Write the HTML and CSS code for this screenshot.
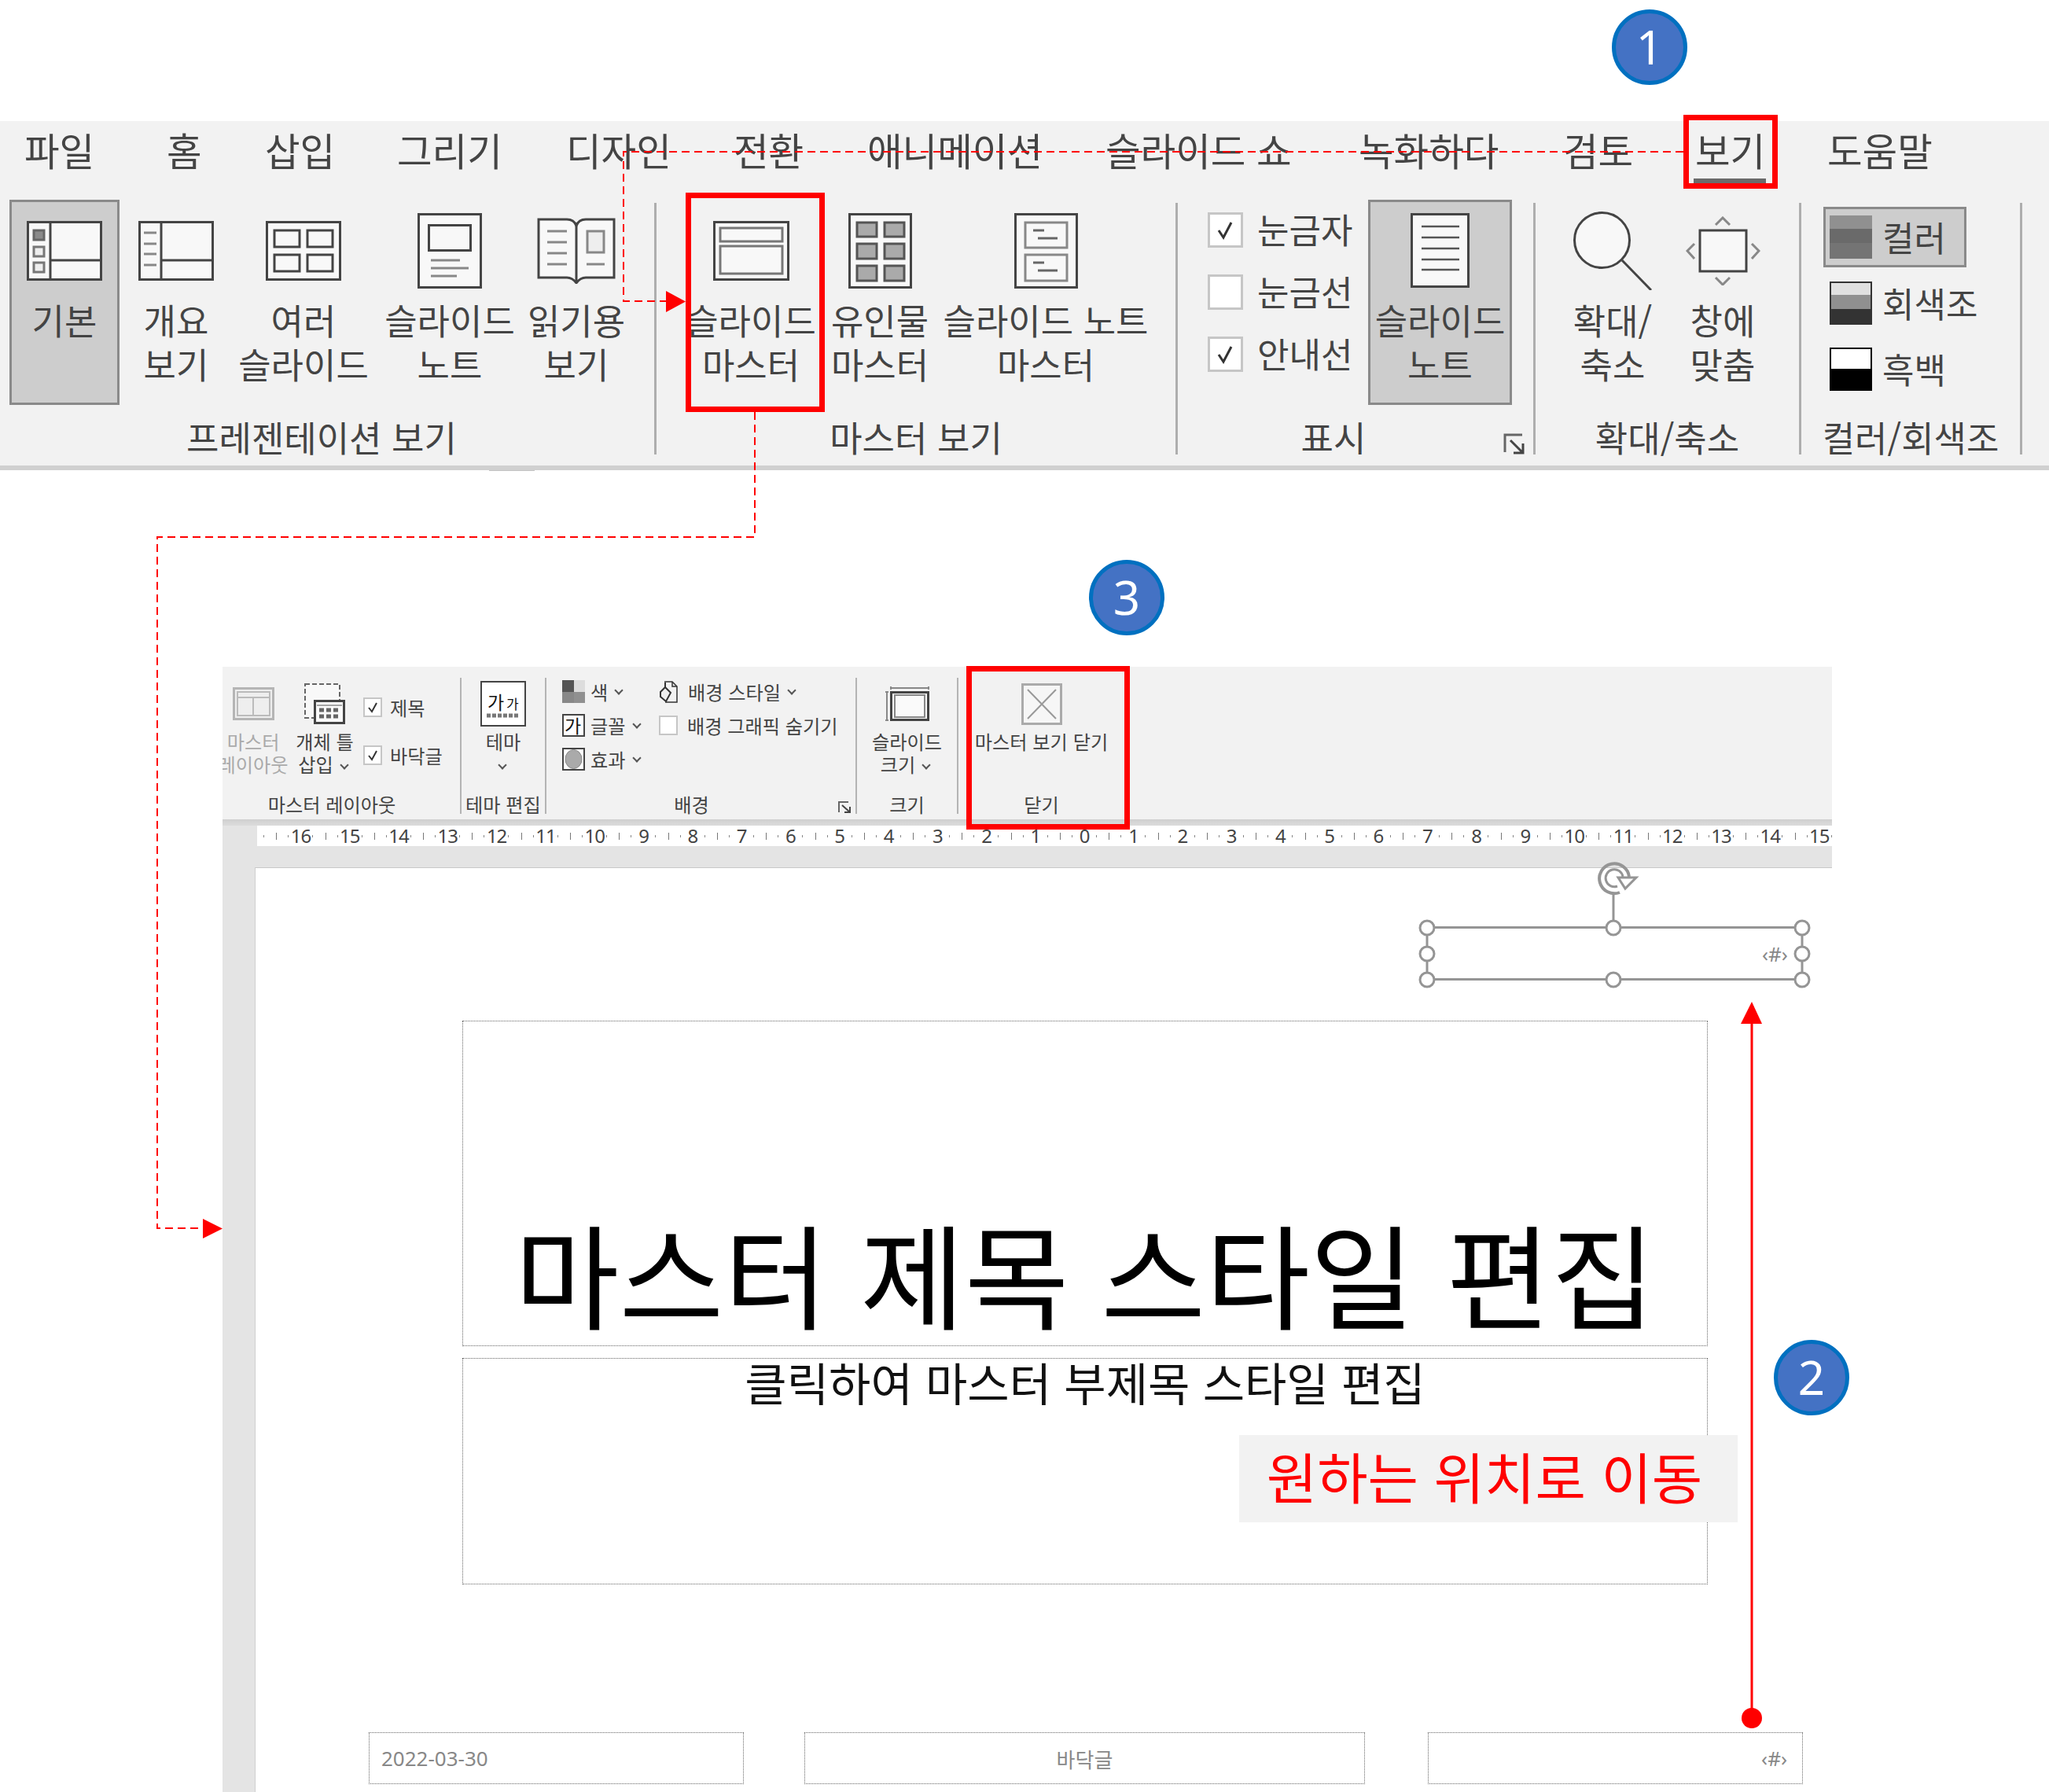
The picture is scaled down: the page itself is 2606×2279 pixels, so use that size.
FILE: index.html
```html
<!DOCTYPE html>
<html lang="ko">
<head>
    <meta charset="UTF-8">
    <title>슬라이드 마스터</title>
    <link rel="stylesheet" href="styles.css">
</head>
<body>
<div class="page">

    <!-- view tab ribbon -->
    <section class="ribbon">
        <nav class="tabs">
            <span>파일</span><span>홈</span><span>삽입</span><span>그리기</span><span>디자인</span><span>전환</span>
            <span>애니메이션</span><span>슬라이드 쇼</span><span>녹화하다</span><span>검토</span>
            <span class="tab-active">보기</span><span>도움말</span>
        </nav>
        <div class="groups">
            <div class="group group-views">
                <div class="group-body">
                    <div class="btn btn-on w-140">
                        <div class="slot"><svg width="96" height="76" viewBox="0 0 96 76"><rect x="1.5" y="1.5" width="93" height="73" class="ic"/><path d="M30 2V74M30 50H95" class="ln"/><rect x="9" y="12" width="13" height="12" fill="#8a8a8a" stroke="#666" stroke-width="3"/><rect x="9" y="33" width="13" height="12" fill="#eee" stroke="#777" stroke-width="3"/><rect x="9" y="53" width="13" height="12" fill="#eee" stroke="#777" stroke-width="3"/></svg></div>
                        <span>기본</span>
                    </div>
                    <div class="btn w-144">
                        <div class="slot"><svg width="96" height="76" viewBox="0 0 96 76"><rect x="1.5" y="1.5" width="93" height="73" class="ic"/><path d="M29 2V74M29 50H95" class="ln"/><path d="M7 15H23M7 29H23M7 42H23M7 56H23" class="bar"/></svg></div>
                        <span>개요<br>보기</span>
                    </div>
                    <div class="btn w-180">
                        <div class="slot"><svg width="96" height="76" viewBox="0 0 96 76"><rect x="1.5" y="1.5" width="93" height="73" class="ic"/><path d="M11 12H43V33H11ZM53 12H85V33H53ZM11 43H43V64H11ZM53 43H85V64H53Z" class="ln"/></svg></div>
                        <span>여러<br>슬라이드</span>
                    </div>
                    <div class="btn w-192">
                        <div class="slot"><svg width="82" height="96" viewBox="0 0 82 96"><rect x="1.5" y="1.5" width="79" height="93" class="ic"/><rect x="14.5" y="15.5" width="53" height="32" class="ln"/><path d="M17 60H54M17 70H65M17 80H50" class="bar"/></svg></div>
                        <span>슬라이드<br>노트</span>
                    </div>
                    <div class="btn w-130">
                        <div class="slot"><svg width="100" height="85" viewBox="0 0 100 85"><path d="M2 3H38Q47 3 50 11Q53 3 62 3H98V77H62Q55 77 50 84Q45 77 38 77H2Z" class="ic"/><path d="M50 11V84" class="ln"/><path d="M13 18H38M13 32H38M13 46H38M13 60H38M63 60H86" class="bar"/><rect x="64" y="18" width="21" height="27" fill="#eee" stroke="#888" stroke-width="3"/></svg></div>
                        <span>읽기용<br>보기</span>
                    </div>
                </div>
                <div class="group-label label-views">프레젠테이션 보기</div>
            </div>

            <div class="group group-master">
                <div class="group-body">
                    <div class="btn w-158">
                        <div class="slot"><svg width="97" height="76" viewBox="0 0 97 76"><rect x="1.5" y="1.5" width="94" height="73" class="ic"/><path d="M9 9H88V26H9ZM9 32H88V67H9Z" fill="none" stroke="#777" stroke-width="3"/></svg></div>
                        <span>슬라이드<br>마스터</span>
                    </div>
                    <div class="btn w-160">
                        <div class="slot"><svg width="81" height="96" viewBox="0 0 81 96"><rect x="1.5" y="1.5" width="78" height="93" class="ic"/><path d="M11 12H36V30H11ZM46 12H71V30H46ZM11 39H36V58H11ZM46 39H71V58H46ZM11 67H36V86H11ZM46 67H71V86H46Z" fill="#aaa" stroke="#555" stroke-width="3"/></svg></div>
                        <span>유인물<br>마스터</span>
                    </div>
                    <div class="btn w-262">
                        <div class="slot"><svg width="81" height="96" viewBox="0 0 81 96"><rect x="1.5" y="1.5" width="78" height="93" class="ic"/><path d="M14 12H67V44H14ZM14 53H67V86H14Z" fill="none" stroke="#888" stroke-width="3"/><path d="M24 22H38M30 32H55M24 63H38M30 73H55" class="bar dark"/></svg></div>
                        <span>슬라이드 노트<br>마스터</span>
                    </div>
                </div>
                <div class="group-label">마스터 보기</div>
            </div>

            <div class="group group-show">
                <div class="group-body">
                    <div class="checks">
                        <div class="check-row"><span class="box"><svg width="39" height="39" viewBox="0 0 39 39"><path d="M11 20L17 29L27 10" class="tick"/></svg></span>눈금자</div>
                        <div class="check-row"><span class="box"></span>눈금선</div>
                        <div class="check-row"><span class="box"><svg width="39" height="39" viewBox="0 0 39 39"><path d="M11 20L17 29L27 10" class="tick"/></svg></span>안내선</div>
                    </div>
                    <div class="btn btn-on w-183">
                        <div class="slot"><svg width="75" height="95" viewBox="0 0 75 95"><rect x="1.5" y="1.5" width="72" height="92" class="ic"/><path d="M14 17H62M14 31H62M14 45H62M14 59H62M14 72H62" class="ln thin"/></svg></div>
                        <span>슬라이드<br>노트</span>
                    </div>
                </div>
                <div class="group-label label-show">표시</div>
                <svg class="launcher" width="27" height="27" viewBox="0 0 27 27"><path d="M2 24V2H24" fill="none" stroke="#666" stroke-width="3"/><path d="M9 9L25 25M25 13V25H13" fill="none" stroke="#444" stroke-width="3"/></svg>
            </div>

            <div class="group group-zoom">
                <div class="group-body">
                    <div class="btn w-140">
                        <div class="slot"><svg width="100" height="100" viewBox="0 0 100 100"><ellipse cx="36.500" cy="36.500" rx="35" ry="35" fill="#f8f8f8" stroke="#444" stroke-width="3"/><path d="M62 62L99 100" stroke="#444" stroke-width="3"/></svg></div>
                        <span>확대/<br>축소</span>
                    </div>
                    <div class="btn w-140">
                        <div class="slot"><svg width="95" height="88" viewBox="0 0 95 88"><rect x="18" y="18" width="59" height="52" class="ic"/><path d="M38 11L47 2L56 11M38 78L47 87L56 78M11 35L2 44L11 54M84 35L93 44L84 54" fill="none" stroke="#888" stroke-width="3"/></svg></div>
                        <span>창에<br>맞춤</span>
                    </div>
                </div>
                <div class="group-label">확대/축소</div>
            </div>

            <div class="group group-color">
                <div class="group-body">
                    <div class="modes">
                        <div class="mode mode-on"><svg width="54" height="55" viewBox="0 0 54 55"><rect width="54" height="17" fill="#909090"/><rect y="17" width="54" height="18" fill="#6a6a6a"/><rect y="35" width="54" height="20" fill="#747474"/></svg>컬러</div>
                        <div class="mode"><svg width="54" height="55" viewBox="0 0 54 55"><rect width="54" height="55" fill="#333"/><rect x="2" y="2" width="50" height="15" fill="#e0e0e0"/><rect x="2" y="17" width="50" height="18" fill="#909090"/></svg>회색조</div>
                        <div class="mode"><svg width="54" height="55" viewBox="0 0 54 55"><rect width="54" height="55" fill="#000"/><rect x="2" y="2" width="50" height="25" fill="#fff"/></svg>흑백</div>
                    </div>
                </div>
                <div class="group-label">컬러/회색조</div>
            </div>
        </div>
    </section>

    <!-- slide master screenshot -->
    <section class="master-window">
        <div class="mribbon">
            <div class="mgroup mgroup-layout">
                <div class="mgroup-body">
                    <div class="mbtn mbtn-off w-82">
                        <div class="mslot"><svg width="53" height="42" viewBox="0 0 53 42"><rect x="1.5" y="1.5" width="50" height="39" fill="#eee" stroke="#b5b5b5" stroke-width="3"/><path d="M6 6H47V36H6ZM6 13H47M26 13V36" fill="none" stroke="#bbb" stroke-width="2"/></svg></div>
                        <span>마스터<br>레이아웃</span>
                    </div>
                    <div class="mbtn w-80">
                        <div class="mslot"><svg width="52" height="52" viewBox="0 0 52 52"><rect x="1" y="1" width="44" height="43" fill="#f8f8f8" stroke="#666" stroke-width="2" stroke-dasharray="6 3"/><rect x="13.500" y="22.500" width="37" height="28" fill="#fafafa" stroke="#444" stroke-width="3"/><path d="M16 28H48" stroke="#888" stroke-width="1.500"/><path d="M19 34H45M19 42H45" stroke="#666" stroke-width="5" stroke-dasharray="6 3"/></svg></div>
                        <span>개체 틀<br>삽입 <i class="chev"></i></span>
                    </div>
                    <div class="mchecks">
                        <div class="mcheck-row"><span class="mbox"><svg width="20" height="21" viewBox="0 0 20 21"><path d="M5 11L9 16L15 5" class="tick small"/></svg></span>제목</div>
                        <div class="mcheck-row"><span class="mbox"><svg width="20" height="21" viewBox="0 0 20 21"><path d="M5 11L9 16L15 5" class="tick small"/></svg></span>바닥글</div>
                    </div>
                </div>
                <div class="mgroup-label label-layout">마스터 레이아웃</div>
            </div>

            <div class="mgroup mgroup-theme">
                <div class="mgroup-body">
                    <div class="mbtn w-106">
                        <div class="mslot"><svg width="58" height="58" viewBox="0 0 58 58"><rect x="1" y="1" width="56" height="56" fill="#fff" stroke="#444" stroke-width="2"/><text x="9" y="36" class="ic-text big">가</text><text x="33" y="36" class="ic-text">가</text><path d="M8 44H50" stroke="#777" stroke-width="5" stroke-dasharray="5 2"/></svg></div>
                        <span>테마<br><i class="chev"></i></span>
                    </div>
                </div>
                <div class="mgroup-label">테마 편집</div>
            </div>

            <div class="mgroup mgroup-bg">
                <div class="mgroup-body bg-grid">
                    <div class="mrow"><svg width="29" height="29" viewBox="0 0 29 29"><rect width="15" height="15" fill="#555"/><rect x="15" width="14" height="15" fill="#ddd"/><rect y="15" width="15" height="14" fill="#888"/><rect x="15" y="15" width="14" height="14" fill="#909090"/></svg>색 <i class="chev"></i></div>
                    <div class="mrow"><svg class="style-icon" width="25" height="30" viewBox="0 0 25 30"><path d="M7 2H17L23 8V28H8" fill="none" stroke="#333" stroke-width="1.500"/><path d="M17 2V8H23" fill="none" stroke="#333" stroke-width="1.500"/><path d="M2 15L8 9L15 16L9 27L2 21Z" fill="#eee" stroke="#333" stroke-width="2"/><path d="M8 9V3" stroke="#333" stroke-width="2"/></svg>배경 스타일 <i class="chev"></i></div>
                    <div class="mrow"><svg width="29" height="29" viewBox="0 0 29 29"><rect x="1" y="1" width="27" height="27" fill="#fff" stroke="#444" stroke-width="2"/><text x="3" y="24" class="ic-text big">가</text></svg>글꼴 <i class="chev"></i></div>
                    <div class="mrow"><span class="mbox"></span>배경 그래픽 숨기기</div>
                    <div class="mrow"><svg width="29" height="29" viewBox="0 0 29 29"><rect x="1" y="1" width="27" height="27" fill="#fff" stroke="#444" stroke-width="2"/><ellipse cx="14.500" cy="14.500" rx="10.500" ry="12" fill="#aaa" stroke="#888"/></svg>효과 <i class="chev"></i></div>
                </div>
                <div class="mgroup-label label-bg">배경</div>
                <svg class="mlauncher" width="16" height="15" viewBox="0 0 16 15"><path d="M1 14V1H13" fill="none" stroke="#666" stroke-width="2"/><path d="M5 5L15 14M15 7V14H8" fill="none" stroke="#444" stroke-width="2"/></svg>
            </div>

            <div class="mgroup mgroup-size">
                <div class="mgroup-body">
                    <div class="mbtn w-127">
                        <div class="mslot"><svg width="56" height="44" viewBox="0 0 56 44"><rect x="7.500" y="7.500" width="47" height="35" fill="#f8f8f8" stroke="#444" stroke-width="3"/><rect x="12" y="11" width="38" height="28" fill="#fafafa" stroke="#888" stroke-width="2"/><path d="M7 2H55M7 0V4M55 0V4M2 7V43M0 7H4M0 43H4" fill="none" stroke="#888" stroke-width="2"/></svg></div>
                        <span>슬라이드<br>크기 <i class="chev"></i></span>
                    </div>
                </div>
                <div class="mgroup-label">크기</div>
            </div>

            <div class="mgroup mgroup-close">
                <div class="mgroup-body">
                    <div class="mbtn w-211">
                        <div class="mslot"><svg width="52" height="53" viewBox="0 0 52 53"><rect x="1.500" y="1.500" width="49" height="50" fill="#f6f6f6" stroke="#aaa" stroke-width="3"/><path d="M8 8L44 45M44 8L8 45" stroke="#999" stroke-width="2"/></svg></div>
                        <span>마스터 보기 닫기</span>
                    </div>
                </div>
                <div class="mgroup-label">닫기</div>
            </div>
        </div>
        <div class="mribbon-shadow"></div>

        <div class="ruler">
            <span class="tick-cell"></span>
            <span>16</span><span>15</span><span>14</span><span>13</span><span>12</span><span>11</span><span>10</span><span>9</span>
            <span>8</span><span>7</span><span>6</span><span>5</span><span>4</span><span>3</span><span>2</span><span>1</span>
            <span>0</span>
            <span>1</span><span>2</span><span>3</span><span>4</span><span>5</span><span>6</span><span>7</span><span>8</span>
            <span>9</span><span>10</span><span>11</span><span>12</span><span>13</span><span>14</span><span>15</span>
        </div>

        <div class="slide">
            <div class="ph ph-title"><span>마스터 제목 스타일 편집</span></div>
            <div class="ph ph-sub">클릭하여 마스터 부제목 스타일 편집</div>
            <div class="callout">원하는 위치로 이동</div>
            <div class="ph ph-date">2022-03-30</div>
            <div class="ph ph-footer">바닥글</div>
            <div class="ph ph-num">‹#›</div>
            <div class="sel-num">‹#›</div>
        </div>
    </section>

    <!-- annotation layer -->
    <svg class="marks" width="2606" height="2279" viewBox="0 0 2606 2279">
        <path d="M622 598.500H680" stroke="#c4c4c4" stroke-width="1"/>
        <path d="M2141 193H793V383H850" class="dash"/>
        <path d="M960 524V683H200V1562H260" class="dash"/>
        <path d="M847 370L872 383.500L847 397Z" fill="#f00"/>
        <path d="M258 1550L283 1562.500L258 1575Z" fill="#f00"/>
        <path d="M2228 1300V2185" stroke="#f00" stroke-width="3"/>
        <path d="M2228 1274L2241 1302H2214Z" fill="#f00"/>
        <circle cx="2228" cy="2185" r="13" fill="#f00"/>

        <!-- selected page number box -->
        <path d="M2052 1137V1170M1815 1179.500H2292M1815 1245.500H2292M1815 1180V1246M2292 1180V1246" stroke="#959595" stroke-width="3" fill="none"/>
        <g class="handles">
            <circle cx="1815" cy="1180" r="9"/><circle cx="2052" cy="1180" r="9"/><circle cx="2292" cy="1180" r="9"/>
            <circle cx="1815" cy="1213" r="9"/><circle cx="2292" cy="1213" r="9"/>
            <circle cx="1815" cy="1246" r="9"/><circle cx="2052" cy="1246" r="9"/><circle cx="2292" cy="1246" r="9"/>
        </g>
        <path d="M2072 1115A19 19 0 1 0 2060 1135" fill="none" stroke="#959595" stroke-width="4"/>
        <path d="M2064 1115A11 11 0 1 0 2057 1127" fill="none" stroke="#959595" stroke-width="3"/>
        <path d="M2058 1116H2081L2067 1130Z" fill="#fff" stroke="#959595" stroke-width="3"/>
    </svg>

    <div class="red-box red-tab"></div>
    <div class="red-box red-master"></div>
    <div class="red-box red-close"></div>

    <div class="badge badge-1">1</div>
    <div class="badge badge-2">2</div>
    <div class="badge badge-3">3</div>
</div>
</body>
</html>
```

FILE: styles.css
```css
html, body {
    margin: 0;
    padding: 0;
    background: #fff;
}

.page {
    position: relative;
    width: 2606px;
    height: 2279px;
    padding-top: 154px;
    box-sizing: border-box;
    overflow: hidden;
    font-family: "Noto Sans CJK KR", "Noto Sans", sans-serif;
    color: #444;
}

svg {
    flex: none;
}

/* ---- top ribbon ---- */
.ribbon {
    height: 444px;
    box-sizing: border-box;
    background: #f2f2f2;
    border-bottom: 6px solid #d0d0d0;
}

.tabs {
    display: grid;
    grid-template-columns: 181px 125px 168px 215px 213px 170px 303px 322px 260px 168px 168px auto;
    padding-left: 31px;
    height: 104px;
    font-size: 48.5px;
    line-height: 72px;
    white-space: nowrap;
}

.tab-active {
    position: relative;
}

.tab-active::after {
    content: "";
    position: absolute;
    left: -2px;
    top: 73px;
    width: 92px;
    height: 6px;
    background: #6b6b6b;
}

.groups {
    display: flex;
    font-size: 45px;
}

.group {
    position: relative;
    display: flex;
    flex-direction: column;
    height: 320px;
    box-sizing: border-box;
    border-right: 3px solid #aeaeae;
}

.group-views { width: 835px; padding-left: 12px; }
.group-master { width: 663px; padding-left: 41px; }
.group-show { width: 455px; padding-left: 38px; }
.group-zoom { width: 338px; padding-left: 28px; }
.group-color { width: 281px; padding-left: 28px; }

.group-body {
    display: flex;
    flex: 1;
    margin-top: -4px;
}

.group-label {
    margin: 0 0 2px -41px;
    line-height: 40px;
    text-align: center;
    white-space: nowrap;
}

.group-views .group-label { margin-left: -12px; padding-right: 14px; }
.group-show .group-label { margin-left: -38px; padding-right: 56px; }
.group-zoom .group-label { margin-left: -28px; }
.group-color .group-label { margin-left: -28px; }

.btn {
    display: flex;
    flex-direction: column;
    align-items: center;
    height: 261px;
    box-sizing: border-box;
    border: 3px solid transparent;
    text-align: center;
    line-height: 56px;
    white-space: nowrap;
}

.btn-on {
    background: #cdcdcd;
    border-color: #8a8a8a;
}

.slot {
    display: flex;
    align-items: center;
    justify-content: center;
    height: 122px;
    flex: none;
}

.slot svg {
    margin-top: 1px;
}

.w-130 { width: 130px; }
.w-140 { width: 140px; }
.w-144 { width: 144px; }
.w-158 { width: 158px; margin-right: 5px; }
.w-160 { width: 160px; }
.w-180 { width: 180px; }
.w-183 { width: 183px; }
.w-192 { width: 192px; }
.w-262 { width: 262px; }

.ic { fill: #f8f8f8; stroke: #444; stroke-width: 3; }
.ln { fill: none; stroke: #444; stroke-width: 3; }
.ln.thin { stroke: #555; stroke-width: 2.5; }
.bar { fill: none; stroke: #888; stroke-width: 3; }
.bar.dark { stroke: #666; }
.tick { fill: none; stroke: #333; stroke-width: 3; }
.tick.small { stroke-width: 2; }

.checks {
    display: flex;
    flex-direction: column;
    gap: 34px;
    width: 204px;
    margin-top: 14px;
    font-size: 44px;
}

.check-row {
    display: flex;
    align-items: center;
    gap: 18px;
    height: 45px;
    white-space: nowrap;
}

.box {
    width: 45px;
    height: 45px;
    box-sizing: border-box;
    flex: none;
    margin-top: 4px;
    background: #fff;
    border: 3px solid #c6c6c6;
}

.box svg, .mbox svg {
    display: block;
}

.launcher {
    position: absolute;
    right: 11px;
    bottom: 0;
}

.modes {
    display: flex;
    flex-direction: column;
    gap: 7px;
    margin-top: 9px;
    font-size: 44px;
}

.mode {
    display: flex;
    align-items: center;
    gap: 13px;
    width: 182px;
    height: 77px;
    box-sizing: border-box;
    padding: 0 0 1px 5px;
    border: 3px solid transparent;
    white-space: nowrap;
}

.mode svg {
    margin-top: 1px;
}

.mode-on {
    background: #cdcdcd;
    border-color: #8a8a8a;
}

/* ---- slide master screenshot ---- */
.master-window {
    width: 2047px;
    height: 1681px;
    margin: 250px 0 0 283px;
    background: #e4e4e4;
    overflow: hidden;
}

.mribbon {
    display: flex;
    height: 194px;
    box-sizing: border-box;
    padding-top: 14px;
    background: #f2f2f2;
    font-size: 24.2px;
    overflow: hidden;
}

.mgroup {
    position: relative;
    display: flex;
    flex-direction: column;
    height: 173px;
    box-sizing: border-box;
    border-right: 2px solid #b4b4b4;
}

.mgroup-layout { width: 304px; }
.mgroup-theme { width: 108px; }
.mgroup-bg { width: 395px; }
.mgroup-size { width: 129px; }
.mgroup-close { width: 213px; }

.mgroup-body {
    display: flex;
    flex: 1;
}

.mgroup-label {
    line-height: 24px;
    text-align: center;
    white-space: nowrap;
}

.label-layout { padding-right: 24px; }
.label-bg { padding-right: 24px; }

.mbtn {
    display: flex;
    flex-direction: column;
    align-items: center;
    text-align: center;
    line-height: 29px;
    white-space: nowrap;
}

.mbtn-off {
    color: #aaa;
    margin-left: -2px;
}

.mslot {
    display: flex;
    align-items: center;
    justify-content: center;
    height: 66px;
    flex: none;
}

.w-82 { width: 82px; margin-right: 10px; }
.w-80 { width: 80px; margin-right: 9px; }
.w-106 { width: 106px; }
.w-127 { width: 127px; }
.w-211 { width: 211px; }

.mchecks {
    display: flex;
    flex-direction: column;
    gap: 36px;
    margin-top: 25px;
}

.mcheck-row {
    display: flex;
    align-items: center;
    gap: 10px;
    height: 25px;
    white-space: nowrap;
}

.mbox {
    width: 24px;
    height: 25px;
    box-sizing: border-box;
    flex: none;
    background: #fff;
    border: 2px solid #c6c6c6;
}

.bg-grid {
    display: grid;
    grid-template-columns: 123px auto;
    grid-auto-rows: 29px;
    row-gap: 14px;
    align-content: start;
    padding: 3px 0 0 20px;
}

.mrow {
    display: flex;
    align-items: center;
    gap: 7px;
    white-space: nowrap;
}

.mrow .mbox {
    margin-right: 5px;
}

.style-icon {
    margin-right: 5px;
}

.chev {
    display: inline-block;
    width: 6px;
    height: 6px;
    margin: 0 5px 4px 3px;
    border-right: 2px solid #555;
    border-bottom: 2px solid #555;
    transform: rotate(45deg);
    vertical-align: middle;
}

.ic-text {
    font-family: "Noto Sans CJK KR", sans-serif;
    font-size: 17px;
    fill: #111;
}

.ic-text.big {
    font-size: 23px;
}

.mlauncher {
    position: absolute;
    right: 6px;
    bottom: 1px;
}

.mribbon-shadow {
    height: 8px;
    background: linear-gradient(#cfcfcf, #dcdcdc);
}

.ruler {
    display: flex;
    height: 26px;
    margin-left: 44px;
    background: #fff;
    overflow: hidden;
    font-family: "Noto Sans", sans-serif;
    font-size: 24px;
    line-height: 26px;
    letter-spacing: -1px;
    color: #444;
}

.ruler span {
    flex: 0 0 62.3px;
    text-align: center;
    background:
        linear-gradient(#888, #888) 15px 50% / 1px 3px no-repeat,
        linear-gradient(#888, #888) 46px 50% / 1px 3px no-repeat,
        linear-gradient(#777, #777) 0 50% / 1px 9px no-repeat;
}

.ruler .tick-cell {
    margin-left: -38px;
}

.slide {
    position: relative;
    height: 1203px;
    margin: 27px 0 0 41px;
    background: #fff;
    border-top: 1px solid #c8c8c8;
    border-left: 1px solid #cfcfcf;
    box-sizing: border-box;
}

/* placeholders sit on the slide canvas */
.ph {
    position: absolute;
    box-sizing: border-box;
    border: 1px dotted #666;
    display: flex;
    justify-content: center;
    white-space: nowrap;
}

.ph-title {
    left: 263px;
    top: 194px;
    width: 1584px;
    height: 414px;
    align-items: flex-end;
    padding-bottom: 8px;
    font-size: 144.5px;
    line-height: 172px;
    color: #000;
}

.ph-sub {
    left: 263px;
    top: 623px;
    width: 1584px;
    height: 288px;
    font-size: 58px;
    line-height: 58px;
    color: #111;
}

.callout {
    position: absolute;
    left: 1251px;
    top: 721px;
    width: 634px;
    height: 111px;
    padding-right: 10px;
    box-sizing: border-box;
    background: #f2f2f2;
    color: #f00;
    font-size: 70px;
    line-height: 104px;
    text-align: center;
    white-space: nowrap;
}

.ph-date, .ph-footer, .ph-num {
    top: 1099px;
    height: 66px;
    align-items: center;
    font-size: 26px;
    color: #888;
}

.ph-date {
    left: 144px;
    width: 477px;
    justify-content: flex-start;
    padding-left: 15px;
    font-family: "Noto Sans", sans-serif;
}

.ph-footer {
    left: 698px;
    width: 713px;
}

.ph-num, .sel-num {
    font-family: "Noto Sans", sans-serif;
}

.ph-num {
    left: 1491px;
    width: 477px;
    justify-content: flex-end;
    padding-right: 19px;
}

.sel-num {
    position: absolute;
    left: 1916px;
    top: 94px;
    font-size: 26px;
    line-height: 30px;
    color: #888;
}

/* ---- annotations ---- */
.marks {
    position: absolute;
    left: 0;
    top: 0;
}

.dash {
    fill: none;
    stroke: #f00;
    stroke-width: 2;
    stroke-dasharray: 10 6;
}

.handles circle {
    fill: #fff;
    stroke: #959595;
    stroke-width: 3;
}

.red-box {
    position: absolute;
    box-sizing: border-box;
    border: 7px solid #f00;
}

.red-tab { left: 2141px; top: 146px; width: 120px; height: 94px; }
.red-master { left: 872px; top: 245px; width: 177px; height: 279px; }
.red-close { left: 1229px; top: 847px; width: 208px; height: 208px; }

.badge {
    position: absolute;
    width: 96px;
    height: 96px;
    box-sizing: border-box;
    border: 5px solid #0070c0;
    border-radius: 50%;
    background: #4472c4;
    color: #fff;
    font-family: "Noto Sans", sans-serif;
    font-size: 60px;
    line-height: 84px;
    text-align: center;
}

.badge-1 { left: 2050px; top: 12px; }
.badge-2 { left: 2256px; top: 1704px; }
.badge-3 { left: 1385px; top: 712px; }
```
